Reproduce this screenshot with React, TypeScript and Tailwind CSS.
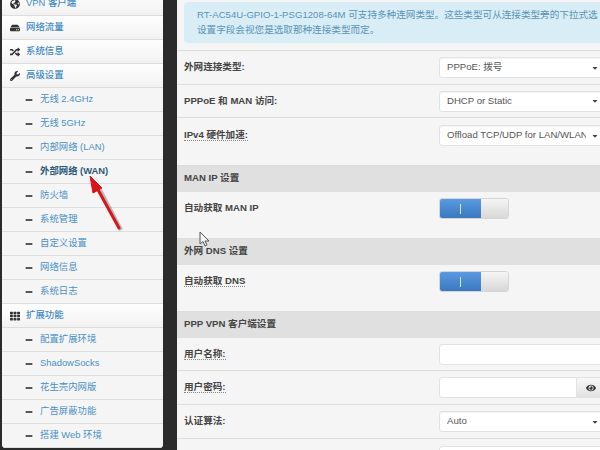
import React from 'react';
import { FaGlobeAmericas, FaHdd, FaRandom, FaWrench, FaTh, FaMinus, FaEye, FaCaretDown } from 'react-icons/fa';

const font = "font-['Liberation_Sans','Noto_Sans_CJK_SC',sans-serif]";

const TopRow = ({ icon, label }: { icon: React.ReactNode; label: string }) => (
  <div className="h-6 flex items-center pl-[5px] border-b border-[#dddddd] bg-gradient-to-b from-white to-[#f2f2f2]">
    <span className="w-[16px] flex justify-center text-[#333333] text-[10px]">{icon}</span>
    <span className="ml-[3px] text-[9.4px] font-medium text-[#3f8ac4]">{label}</span>
  </div>
);

const SubRow = ({ label, active }: { label: string; active?: boolean }) => (
  <div className="h-6 flex items-center pl-[23px] border-b border-[#dddddd] bg-[#f5f5f5]">
    <FaMinus className="text-[#222222] text-[8px]" />
    <span className={active ? 'ml-[7px] text-[9.4px] font-bold text-[#2c5a78]' : 'ml-[7px] text-[9.4px] text-[#4a90c6]'}>{label}</span>
  </div>
);

const Label = ({ children, dotted }: { children: React.ReactNode; dotted?: boolean }) => (
  <div className="w-[262px] pl-[7px] mb-[3px] shrink-0 leading-[16px]">
    <span className={dotted ? 'text-[9.6px] font-semibold text-[#444444] border-b border-dotted border-[#888888]' : 'text-[9.6px] font-semibold text-[#444444]'}>{children}</span>
  </div>
);

const Select = ({ value }: { value: string }) => (
  <div className="w-[167px] h-[21px] shrink-0 flex items-center justify-between pl-[7px] pr-[6px] bg-white border border-[#e2e2e2] rounded-[3px] shadow-[inset_0_1px_1px_rgba(0,0,0,0.05)]">
    <span className="w-[139px] text-[9.6px] text-[#555555] whitespace-nowrap overflow-hidden">{value}</span>
    <FaCaretDown className="text-[#444444] text-[8px] shrink-0" />
  </div>
);

const Row = ({ children, short }: { children: React.ReactNode; short?: boolean }) => (
  <div className={short ? 'h-[33px] flex items-center border-b border-[#dddddd]' : 'h-[34px] flex items-center border-b border-[#dddddd]'}>{children}</div>
);

const Toggle = () => (
  <div className="w-[70px] h-[21px] flex rounded-[3px] overflow-hidden border border-[#d5d5d5] shrink-0">
    <div className="w-[41px] flex items-center justify-center bg-gradient-to-b from-[#5a9ae0] to-[#3a78c0]">
      <div className="w-[1px] h-[10px] bg-[#cfe6fb]" />
    </div>
    <div className="flex-1 bg-gradient-to-b from-[#f5f5f5] to-[#d8d8d8]" />
  </div>
);

const Section = ({ title }: { title: string }) => (
  <div className="h-[27px] flex items-center pl-[7px] pb-[2px] bg-[#e0e0e0] border-t border-[#dddddd] text-[9.6px] font-semibold text-[#444444]">{title}</div>
);

export default function App() {
  return (
    <div className={`relative w-[600px] h-[450px] overflow-hidden flex bg-[#2b2b2b] ${font}`}>
      {/* left menu */}
      <div className="w-[161px] ml-[2px] -mt-[8px] h-[456px] shrink-0 rounded-b-[4px] overflow-hidden bg-[#f5f5f5]">
        <TopRow icon={<FaGlobeAmericas />} label="VPN 客户端" />
        <TopRow icon={<FaHdd />} label="网络流量" />
        <TopRow icon={<FaRandom />} label="系统信息" />
        <TopRow icon={<FaWrench />} label="高级设置" />
        <SubRow label="无线 2.4GHz" />
        <SubRow label="无线 5GHz" />
        <SubRow label="内部网络 (LAN)" />
        <SubRow label="外部网络 (WAN)" active />
        <SubRow label="防火墙" />
        <SubRow label="系统管理" />
        <SubRow label="自定义设置" />
        <SubRow label="网络信息" />
        <SubRow label="系统日志" />
        <TopRow icon={<FaTh />} label="扩展功能" />
        <SubRow label="配置扩展环境" />
        <SubRow label="ShadowSocks" />
        <SubRow label="花生壳内网版" />
        <SubRow label="广告屏蔽功能" />
        <SubRow label="搭建 Web 环境" />
      </div>

      {/* main panel */}
      <div className="ml-[14px] flex-1 min-w-0 bg-[#f5f5f5] overflow-hidden">
        <div className="h-[51px] pl-[7px] pt-[2px] border-b border-[#dddddd]">
          <div className="w-[500px] h-[41px] pl-[13px] pt-[5px] rounded-[4px] bg-[#d9edf7] text-[9.6px] leading-[15px] text-[#5a93b5] whitespace-nowrap">
            <div>RT-AC54U-GPIO-1-PSG1208-64M 可支持多种连网类型。这些类型可从连接类型旁的下拉式选</div>
            <div>设置字段会视您是选取那种连接类型而定。</div>
          </div>
        </div>
        <Row><Label>外网连接类型:</Label><Select value="PPPoE: 拨号" /></Row>
        <Row short><Label>PPPoE 和 MAN 访问:</Label><Select value="DHCP or Static" /></Row>
        <div className="h-[47px] flex items-start pt-[7px]"><Label dotted>IPv4 硬件加速:</Label><Select value="Offload TCP/UDP for LAN/WLAN" /></div>
        <Section title="MAN IP 设置" />
        <div className="h-[46px] flex items-start pt-[6px]"><Label>自动获取 MAN IP</Label><Toggle /></div>
        <Section title="外网 DNS 设置" />
        <div className="h-[46px] flex items-start pt-[6px]"><Label dotted>自动获取 DNS</Label><Toggle /></div>
        <Section title="PPP VPN 客户端设置" />
        <Row short>
          <Label dotted>用户名称:</Label>
          <div className="w-[167px] h-[21px] shrink-0 bg-white border border-[#e2e2e2] rounded-[3px]" />
        </Row>
        <Row>
          <Label dotted>用户密码:</Label>
          <div className="h-[21px] flex shrink-0">
            <div className="w-[138px] bg-white border border-[#e2e2e2] rounded-l-[3px]" />
            <div className="w-[29px] flex items-center justify-center bg-gradient-to-b from-[#f8f8f8] to-[#e2e2e2] border-y border-r border-[#e2e2e2]">
              <FaEye className="text-[#333333] text-[10px]" />
            </div>
          </div>
        </Row>
        <Row><Label>认证算法:</Label><Select value="Auto" /></Row>
        <div className="pt-[7px] pl-[262px]">
          <div className="w-[167px] h-[21px] bg-white border border-[#e2e2e2] rounded-[3px]" />
        </div>
      </div>

      {/* annotation arrow drawn on the screenshot */}
      <svg className="absolute left-[85px] top-[172px]" width="42" height="62" viewBox="0 0 42 62">
        <path d="M34 56 L13 16" stroke="#00000040" strokeWidth="4" fill="none" transform="translate(2 2)" />
        <path d="M5 4 L8 21 L17 16 Z" fill="#d9151c" stroke="#d9151c" strokeWidth="1" strokeLinejoin="round" />
        <path d="M34 56 L12 16" stroke="#d9151c" strokeWidth="3" fill="none" strokeLinecap="round" />
      </svg>

      {/* mouse cursor */}
      <svg className="absolute left-[199px] top-[231px]" width="12" height="17" viewBox="0 0 12 17">
        <path d="M1 1 L1 13 L4 10.5 L6 15 L8 14 L6 10 L10 10 Z" fill="#f5f5f5" stroke="#555555" strokeWidth="1" strokeLinejoin="round" />
      </svg>
    </div>
  );
}
